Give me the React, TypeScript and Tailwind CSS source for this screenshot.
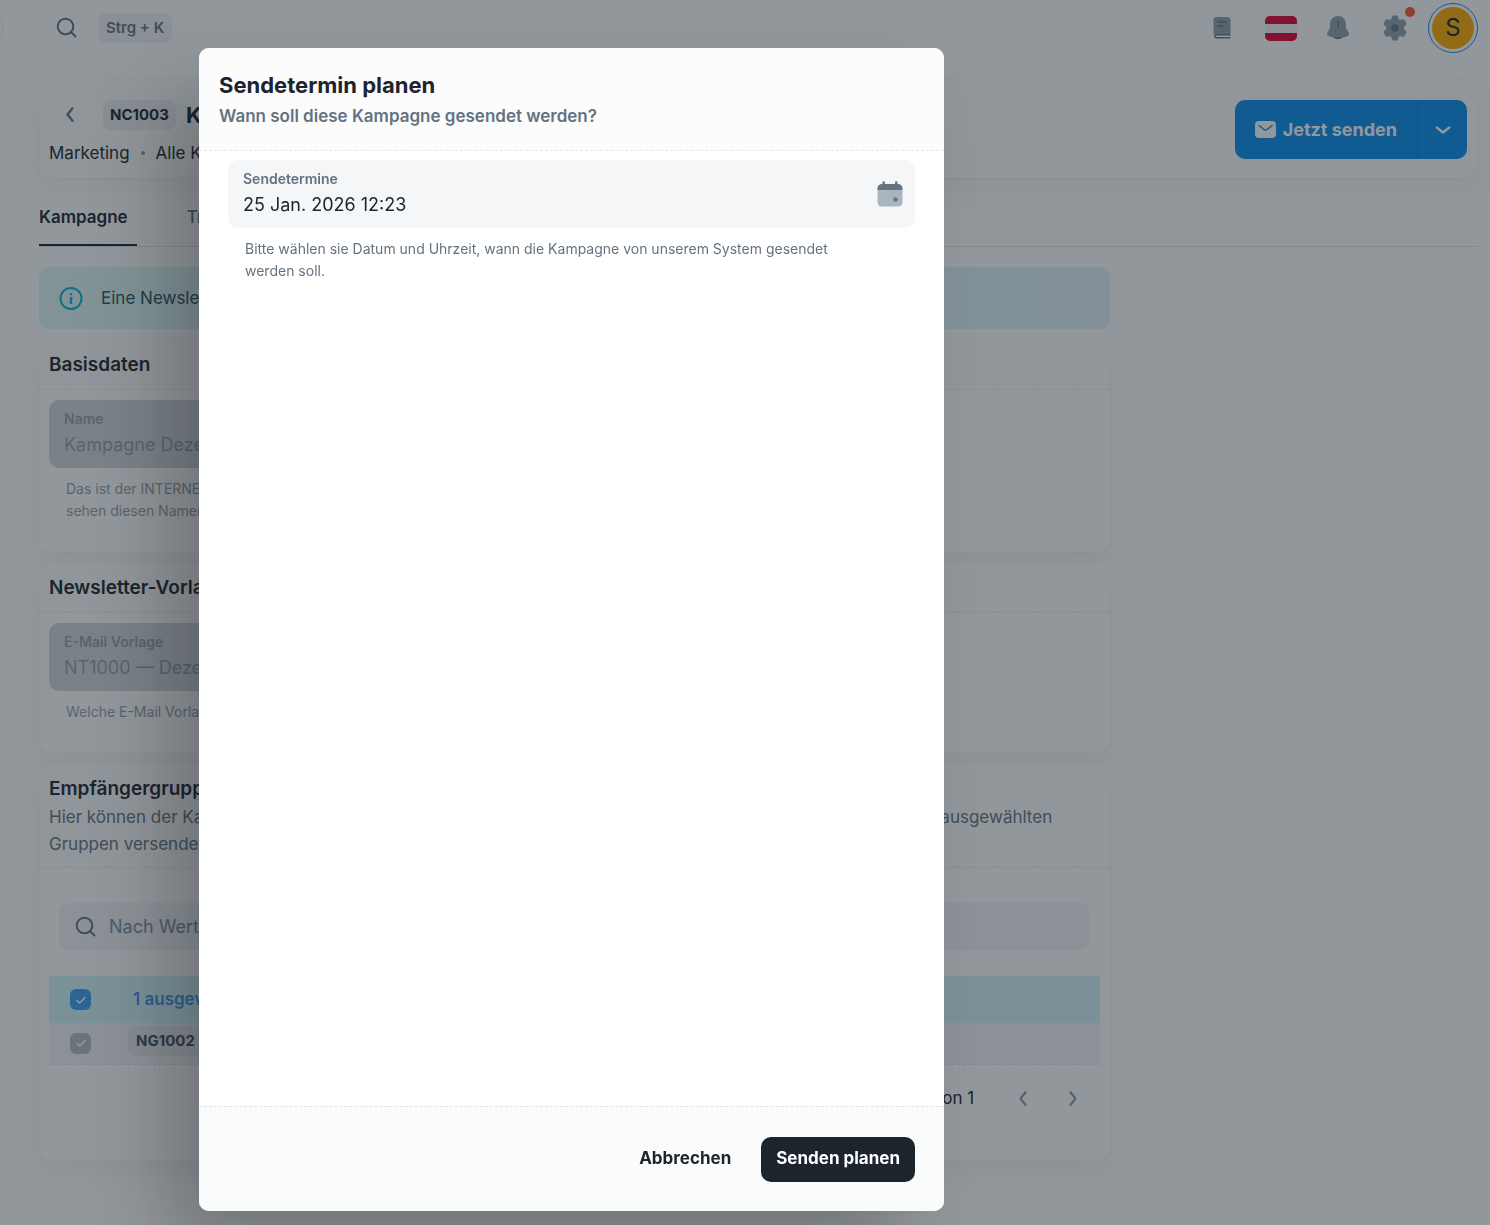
import { ReactNode } from "react";

const SearchIcon = () => (
  <svg viewBox="0 0 24 24" className="w-6 h-6 shrink-0" fill="none" stroke="currentColor" strokeWidth="2" strokeLinecap="round">
    <circle cx="10.500" cy="10.500" r="7.800" />
    <path d="m16.500 16.500 4 4" />
  </svg>
);

const Chevron = ({ d, className }: { d: string; className: string }) => (
  <svg viewBox="0 0 24 24" className={className} fill="none" stroke="currentColor" strokeWidth="2.8" strokeLinecap="round" strokeLinejoin="round">
    <path d={d} />
  </svg>
);

const LEFT = "m15 4-6 7.500 6 7.500";
const RIGHT = "m9 4 6 7.500-6 7.500";
const DOWN = "m4.500 9 7.500 6 7.500-6";

const BookIcon = () => (
  <svg viewBox="0 0 18 22" className="w-[18px] h-[22px]">
    <path fill="#919eab" d="M3.500 0h11A3 3 0 0 1 17.500 3v14H2.500A2 2 0 0 0 .5 18V3a3 3 0 0 1 3-3Z" />
    <path fill="#637381" d="M3 17h14.500v1.500H3.500a.8.8 0 0 0 0 1.500h14v1.500H3a2.300 2.300 0 0 1 0-4.500Z" />
    <path stroke="#637381" strokeWidth="1.500" strokeLinecap="round" d="M5 5h8M5 9h5" />
  </svg>
);

const FlagIcon = () => (
  <svg viewBox="0 0 32 25" className="w-8 h-[25px]">
    <rect width="32" height="25" rx="5" fill="#f4f6f8" />
    <path fill="#e00034" d="M5 0h22a5 5 0 0 1 5 5v3H0V5a5 5 0 0 1 5-5ZM0 17h32v3a5 5 0 0 1-5 5H5a5 5 0 0 1-5-5Z" />
  </svg>
);

const BellIcon = () => (
  <svg viewBox="0 0 22 25" className="w-[22px] h-[25px]">
    <path fill="#637381" d="M5 20h12a6.500 5 0 0 1-12 0Z" />
    <path fill="#919eab" d="M11 0a8 8 0 0 1 8 8v3c0 1.500.6 2.500 1.700 4 2.300 3.200 1.300 5-1.700 5.700-5 1-11 1-16 0-3-.7-4-2.500-1.700-5.700C2.400 13.500 3 12.500 3 11V8a8 8 0 0 1 8-8Z" />
    <path stroke="#637381" strokeWidth="1.600" strokeLinecap="round" d="M11 5.500v5" />
  </svg>
);

const GearIcon = () => (
  <svg viewBox="0 0 24 26" className="w-6 h-[26px]">
    <path
      fill="#919eab"
      stroke="#919eab"
      strokeWidth="3"
      strokeLinejoin="round"
      d="M10.300 2h3.400l.7 3.400 2.300 1.300L20 5.600l2 3.200-2.600 2.400v3.600l2.600 2.400-2 3.200-3.300-1.100-2.300 1.300-.7 3.400h-3.400l-.7-3.400-2.300-1.300L4 20.400l-2-3.200 2.600-2.400v-3.600L2 8.800l2-3.200 3.300 1.100 2.300-1.300Z"
    />
    <circle cx="12" cy="13" r="3.800" fill="#637381" />
  </svg>
);

const MailIcon = () => (
  <svg viewBox="0 0 21 17" className="w-[21px] h-[17px]">
    <rect width="21" height="17" rx="4" fill="#fff" />
    <path d="m4 4.500 5 4a2.400 2.400 0 0 0 3 0l5-4" fill="none" stroke="#078dee" strokeWidth="1.500" strokeLinecap="round" />
  </svg>
);

const CalendarIcon = () => (
  <svg viewBox="0 0 26 26" className="w-[26px] h-[26px]">
    <path fill="#a9b4be" d="M.5 9h25v12a4.500 4.500 0 0 1-4.500 4.500H5A4.500 4.500 0 0 1 .5 21Z" />
    <path fill="#637381" d="M5.500 1.500a1.200 1.200 0 0 1 2.400 0V3h10.200V1.500a1.200 1.200 0 0 1 2.400 0V3h.5a4.500 4.500 0 0 1 4.500 4.500V9H.5V7.500A4.500 4.500 0 0 1 5 3h.5Z" />
    <circle cx="18.500" cy="18.500" r="2.200" fill="#637381" />
  </svg>
);

const InfoIcon = () => (
  <svg viewBox="0 0 24 24" className="w-6 h-6 shrink-0" fill="none" stroke="#00b8d9" strokeWidth="2">
    <circle cx="12" cy="11.500" r="10.500" />
    <path d="M12 10v7M12 6v2.200" strokeWidth="2.400" />
  </svg>
);

const Card = ({ title, text, children }: { title: string; text?: string; children: ReactNode }) => (
  <section className="mt-2.5 rounded-xl bg-white shadow-[0_0_2px_0_rgba(145,158,171,0.2),0_12px_24px_-4px_rgba(145,158,171,0.12)]">
    <div className="px-2.5 pt-[11px] pb-[9px] rounded-t-xl bg-[#fcfdfd] border-b border-dashed border-[#e3e6ea]">
      <h2 className="text-[19px] leading-[30px] font-semibold">{title}</h2>
      {text && <p className="text-[17px] leading-[27px] text-[#637381]">{text}</p>}
    </div>
    {children}
  </section>
);

const DisabledField = ({ id, label, value, help }: { id: string; label: string; value: string; help: string }) => (
  <div className="w-2/3 px-2.5 pt-2.5 pb-[30px]">
    <div className="h-[68px] px-[15px] pt-2 rounded-[10px] bg-[#d2d6db]">
      <label htmlFor={id} className="block text-sm leading-[22px] font-semibold text-[#919eab]">
        {label}
      </label>
      <input id={id} disabled defaultValue={value} className="block w-full text-lg leading-[30px] text-[#919eab]" />
    </div>
    <p className="mt-2.5 px-[17px] text-sm leading-[22px] text-[#919eab] whitespace-pre-line">{help}</p>
  </div>
);

const Checkbox = ({ label, className, disabled }: { label: string; className: string; disabled?: boolean }) => (
  <span className="grid w-[21px] h-[21px] place-items-center">
    <input type="checkbox" aria-label={label} defaultChecked disabled={disabled} className={className} />
    <svg viewBox="0 0 12 12" className="col-start-1 row-start-1 w-3 h-3 pointer-events-none" fill="none" stroke="#fff" strokeWidth="1.600" strokeLinecap="round" strokeLinejoin="round">
      <path d="m2 6.500 2.600 2.500L10 3.500" />
    </svg>
  </span>
);

const TopBar = () => (
  <header className="relative flex items-center justify-between h-14 pl-[55px] pr-3">
    <button aria-label="Menü einklappen" className="absolute top-4 -left-5 w-6 h-6 rounded-full border border-[#e3e6ea]" />
    <button className="flex items-center gap-[19px] text-[#637381]">
      <SearchIcon />
      <span className="px-2 rounded-lg bg-[#f0f2f5] text-[15px] leading-[30px] font-semibold">Strg + K</span>
    </button>
    <div className="flex items-center">
      <button aria-label="Handbuch" className="mr-[34px]">
        <BookIcon />
      </button>
      <button aria-label="Sprache" className="mr-[30px]">
        <FlagIcon />
      </button>
      <button aria-label="Benachrichtigungen" className="mr-[34px]">
        <BellIcon />
      </button>
      <button aria-label="Einstellungen" className="relative mr-[21px]">
        <GearIcon />
        <span className="absolute -top-2 -right-2 w-2.5 h-2.5 rounded-full bg-[#ff5630]" />
      </button>
      <button className="w-[50px] h-[50px] p-[3px] rounded-full border border-[#078dee]">
        <span className="flex items-center justify-center w-full h-full rounded-full bg-[#ffab00] text-2xl">S</span>
      </button>
    </div>
  </header>
);

const PageHeader = () => (
  <section className="flex items-start justify-between mt-6 pl-2.5 pr-[11px] pt-5 pb-[13px] rounded-xl bg-[#fcfdfd] shadow-[0_0_2px_0_rgba(145,158,171,0.2),0_12px_24px_-4px_rgba(145,158,171,0.12)]">
    <div>
      <div className="flex items-center h-[30px]">
        <a href="#back" aria-label="Zurück" className="flex items-center justify-center w-[42px] mr-3 text-[#637381]">
          <Chevron d={LEFT} className="w-5 h-5" />
        </a>
        <span className="px-[7px] mr-2.5 rounded-lg bg-[#eceef2] text-[15px] leading-[30px] font-bold">NC1003</span>
        <h1 className="text-[22px] font-bold">Kampagne Dezember</h1>
      </div>
      <nav className="flex items-center gap-[11px] mt-[11px] text-[17px] leading-6">
        <a href="#marketing">Marketing</a>
        <span className="w-1 h-1 rounded-full bg-[#919eab]" />
        <a href="#kampagnen">Alle Kampagnen</a>
      </nav>
    </div>
    <div className="flex h-[59px] rounded-[10px] bg-[#078dee] text-white">
      <button className="flex items-center gap-[7px] px-5 border-r border-[#0678cc] text-lg font-bold">
        <MailIcon />
        Jetzt senden
      </button>
      <button aria-label="Weitere Aktionen" className="flex items-center justify-center w-[49px]">
        <Chevron d={DOWN} className="w-5 h-5" />
      </button>
    </div>
  </section>
);

const Groups = () => (
  <Card
    title="Empfängergruppen"
    text="Hier können der Kampagne alle Gruppen von Empfängern zugewiesen werden. Die Kampagne wird an alle aus ausgewählten Gruppen versendet."
  >
    <div className="px-2.5 pb-[38px]">
      <label className="flex items-center gap-[11px] h-[47px] mt-[35px] mx-2.5 px-[15px] rounded-[10px] bg-[#f2f3f8] text-[#637381]">
        <SearchIcon />
        <input type="text" aria-label="Suche" placeholder="Nach Wert suchen" className="w-full text-lg placeholder:text-[#7d8b98]" />
      </label>
      <table className="w-full mt-[26px] text-left">
        <tbody>
          <tr className="h-[47px] bg-[#d2f4f9]">
            <td className="w-[79px] pl-[21px]">
              <Checkbox label="Alle auswählen" className="col-start-1 row-start-1 appearance-none w-[21px] h-[21px] rounded-md bg-[#3b9ff0]" />
            </td>
            <td className="pl-[5px] text-[17px] font-semibold text-[#3b93e8]">1 ausgewählt</td>
          </tr>
          <tr className="h-[41px] bg-[#f2f3f8] border-b border-dashed border-[#dfe3e8]">
            <td className="pl-[21px]">
              <Checkbox label="NG1002" disabled className="col-start-1 row-start-1 appearance-none w-[21px] h-[21px] rounded-md bg-[#b5bcc4]" />
            </td>
            <td className="align-top pt-[3px]">
              <span className="block w-fit px-2 rounded-lg bg-[#e6e9ec] text-[15px] leading-[30px] font-bold text-[#454f5b]">NG1002</span>
            </td>
          </tr>
        </tbody>
      </table>
      <div className="flex items-center justify-end h-12 mt-2.5 pr-4">
        <span className="mr-[38px] text-[17px]">1–1 von 1</span>
        <button aria-label="Vorherige Seite" className="mr-[28px] text-[#919eab]">
          <Chevron d={LEFT} className="w-[22px] h-5" />
        </button>
        <button aria-label="Nächste Seite" className="text-[#919eab]">
          <Chevron d={RIGHT} className="w-[22px] h-5" />
        </button>
      </div>
    </div>
  </Card>
);

const ScheduleDialog = () => (
  <div className="fixed inset-0 flex pt-12 pb-3.5 pl-[199px] bg-[#1c252e]/48">
    <div
      role="dialog"
      aria-labelledby="dialog-title"
      className="flex flex-col w-[50vw] overflow-hidden rounded-[10px] bg-white shadow-[-40px_40px_80px_-8px_rgba(0,0,0,0.24)]"
    >
      <div className="px-5 py-5 bg-[#fcfcfd] border-b border-dashed border-[#e3e6ea]">
        <h2 id="dialog-title" className="text-[22px] leading-[34px] font-bold">
          Sendetermin planen
        </h2>
        <p className="text-[17px] leading-7 font-semibold text-[#637381]">Wann soll diese Kampagne gesendet werden?</p>
      </div>
      <div className="flex-1 px-[29px] pt-[9px]">
        <div className="flex items-center h-[68px] pl-[15px] pr-3 rounded-[10px] bg-[#f4f6f8]">
          <div className="flex-1">
            <label htmlFor="date" className="block text-sm leading-[22px] font-semibold text-[#637381]">
              Sendetermine
            </label>
            <input id="date" type="text" defaultValue="25 Jan. 2026 12:23" className="block w-full text-lg leading-[30px]" />
          </div>
          <button aria-label="Kalender öffnen">
            <CalendarIcon />
          </button>
        </div>
        <p className="mt-2.5 pl-[17px] pr-12 text-sm leading-[22px] text-[#637381]">
          Bitte wählen sie Datum und Uhrzeit, wann die Kampagne von unserem System gesendet werden soll.
        </p>
      </div>
      <div className="flex items-center justify-end gap-[30px] h-[105px] px-[29px] bg-[#fafbfb] border-t border-dashed border-[#dfe3e8] text-[17px] font-bold">
        <button>Abbrechen</button>
        <button className="h-[45px] px-[15px] rounded-[10px] bg-[#1c252e] text-white">Senden planen</button>
      </div>
    </div>
  </div>
);

const App = () => {
  return (
    <div className="min-h-screen overflow-hidden bg-white text-[#1c252e] font-['Inter',sans-serif]">
      <TopBar />
      <main className="pl-[39px] pr-3">
        <PageHeader />
        <nav className="flex gap-[50px] h-[59px] mt-2.5 border-b border-[#dfe3e8] text-[17px] font-semibold">
          <a href="#kampagne" className="flex items-center pt-[3px] pr-[9px] border-b-2 border-[#1c252e]">
            Kampagne
          </a>
          <a href="#tracking" className="flex items-center pt-px text-[#637381] font-medium">
            Tracking
          </a>
        </nav>
        <div className="w-3/4 pr-2">
          <div className="flex items-center gap-[18px] h-[62px] mt-5 px-5 pt-0.5 rounded-[10px] bg-linear-to-r from-[#dff7f8] to-[#e2f1fa] text-[17px] text-[#27535c]">
            <InfoIcon />
            <p>Eine Newsletter-Kampagne wird an die Empfängergruppen gesendet.</p>
          </div>
          <Card title="Basisdaten">
            <DisabledField
              id="name"
              label="Name"
              value="Kampagne Dezember"
              help={"Das ist der INTERNE Name der Kampagne. Die Empfänger\nsehen diesen Namen nicht."}
            />
          </Card>
          <Card title="Newsletter-Vorlage">
            <DisabledField id="template" label="E-Mail Vorlage" value="NT1000 — Dezember" help="Welche E-Mail Vorlage soll gesendet werden?" />
          </Card>
          <Groups />
        </div>
      </main>
      <ScheduleDialog />
    </div>
  );
};

export default App;
